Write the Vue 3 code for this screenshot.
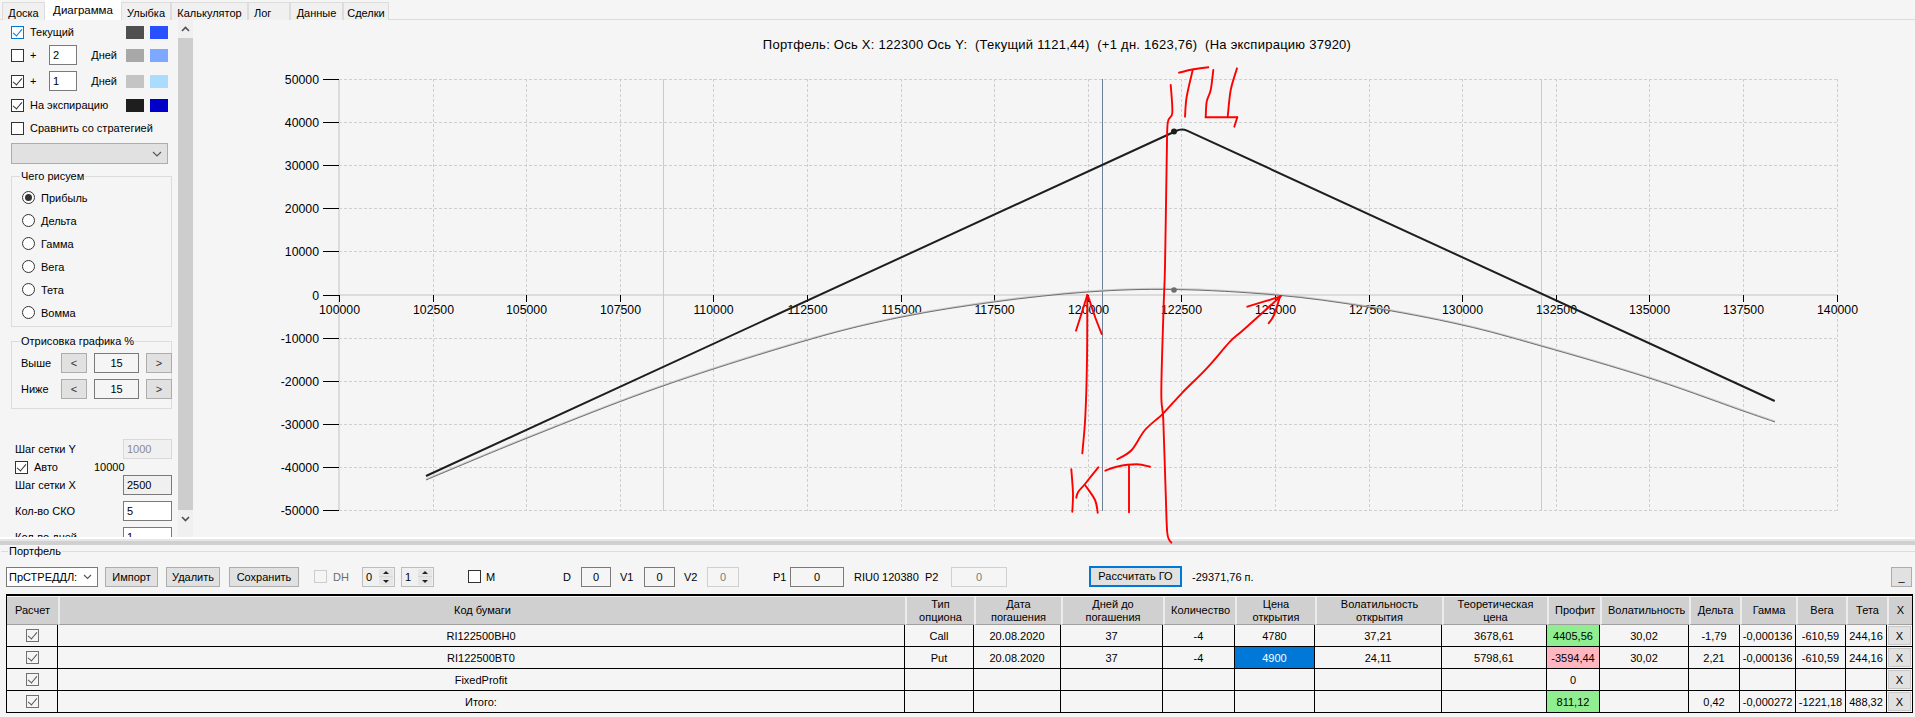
<template>
  <div class="app">
    <div class="tabs">
      <div v-for="t in tabs" :key="t.name" class="tab" :class="[t.cls, { active: t.active }]">{{ t.name }}</div>
    </div>

    <div class="main">
      <div class="side">
        <div class="line r1">
          <span class="cb on focus"></span><span class="lbl">Текущий</span>
          <span class="sw s-dark1"></span><span class="sw s-blue1"></span>
        </div>
        <div class="line r2">
          <span class="cb"></span><span class="plus">+</span><span class="num">2</span><span class="days">Дней</span>
          <span class="sw s-dark2"></span><span class="sw s-blue2"></span>
        </div>
        <div class="line r3">
          <span class="cb on"></span><span class="plus">+</span><span class="num">1</span><span class="days">Дней</span>
          <span class="sw s-dark3"></span><span class="sw s-blue3"></span>
        </div>
        <div class="line r4">
          <span class="cb on"></span><span class="lbl">На экспирацию</span>
          <span class="sw s-dark4"></span><span class="sw s-blue4"></span>
        </div>
        <div class="line r5">
          <span class="cb"></span><span class="lbl">Сравнить со стратегией</span>
        </div>
        <div class="combo-off">
          <svg width="10" height="6" viewBox="0 0 10 6"><path d="M1 1l4 4 4-4" fill="none" stroke="#555" stroke-width="1.1" /></svg>
        </div>

        <div class="group g1">
          <span class="legend">Чего рисуем</span>
          <div v-for="(r, i) in radios" :key="r" class="radio-row">
            <span class="radio" :class="{ sel: i === 0 }"></span><span>{{ r }}</span>
          </div>
        </div>

        <div class="group g2">
          <span class="legend">Отрисовка графика %</span>
          <div class="range-row">
            <span>Выше</span><span class="step">&lt;</span><span class="range-val">15</span><span class="step">&gt;</span>
            <span>Ниже</span><span class="step">&lt;</span><span class="range-val">15</span><span class="step">&gt;</span>
          </div>
        </div>

        <div class="field f-first">
          <span>Шаг сетки Y</span><span class="inp off">1000</span>
        </div>
        <div class="auto">
          <span class="cb on"></span><span class="auto-lbl">Авто</span><span class="auto-val">10000</span>
        </div>
        <div class="field">
          <span>Шаг сетки X</span><span class="inp ro">2500</span>
        </div>
        <div class="field gap">
          <span>Кол-во СКО</span><span class="inp">5</span>
        </div>
        <div class="field gap">
          <span>Кол-во дней</span><span class="inp">1</span>
        </div>
      </div>

      <div class="scroll">
        <svg class="arr" width="9" height="6" viewBox="0 0 9 6"><path d="M1 5l3.5-3.5L8 5" fill="none" stroke="#505050" stroke-width="1.6" /></svg>
        <div class="thumb"></div>
        <svg class="arr" width="9" height="6" viewBox="0 0 9 6"><path d="M1 1l3.5 3.5L8 1" fill="none" stroke="#505050" stroke-width="1.6" /></svg>
      </div>

      <svg class="chart" width="1722" height="517" viewBox="193 20 1722 517">
        <text x="1057" y="49" text-anchor="middle" class="title">{{ title }}</text>

        <!-- сетка -->
        <line v-for="t in yTicks" :key="'gy' + t.v" :x1="X0" :x2="X1" :y1="t.y" :y2="t.y" class="grid" />
        <line v-for="t in xTicks" :key="'gx' + t.v" :x1="t.x" :x2="t.x" :y1="Y_TOP" :y2="Y_BOT" class="grid" />

        <line :x1="X0" :x2="X0" :y1="Y_TOP" :y2="Y_BOT" class="axis" />
        <line :x1="X0" :x2="X1" :y1="Y_ZERO" :y2="Y_ZERO" class="axis" />

        <line v-for="x in [663.5, 1541.5]" :key="x" :x1="x" :x2="x" :y1="Y_TOP" :y2="Y_BOT" class="sigma" />
        <line x1="1102.5" x2="1102.5" :y1="Y_TOP" :y2="Y_BOT" class="spot" />

        <line v-for="t in yTicks" :key="'ty' + t.v" x1="323" :x2="X0" :y1="t.y" :y2="t.y" class="tick" />
        <line v-for="t in xTicks" :key="'tx' + t.v" :x1="t.x" :x2="t.x" :y1="Y_ZERO" :y2="Y_ZERO + 7" class="tick" />

        <text v-for="t in yTicks" :key="'ly' + t.v" x="319" :y="t.y + 4.5" text-anchor="end" class="num-label">{{ t.v }}</text>
        <text v-for="t in xTicks" :key="'lx' + t.v" :x="t.x" y="313.5" text-anchor="middle" class="num-label">{{ t.v }}</text>

        <!-- кривые -->
        <path :d="curve" class="curve-light" transform="translate(0 -0.8)" />
        <path :d="curve" class="curve-dark" />
        <circle cx="1174" cy="290" r="2.8" fill="#6e6e6e" />
        <path d="M426 476L1176 131Q1181.5 128 1187 130.6L1774.7 401" class="expiry" />
        <circle cx="1174" cy="131.5" r="3" fill="#1e1e1e" />
      </svg>
    </div>

    <div class="split"></div>

    <div class="portfolio">
      <span class="legend legend-p">Портфель</span>
      <div class="tool">
        <div class="t-combo">
          <span>ПрСТРЕДДЛ:</span>
          <svg width="9" height="6" viewBox="0 0 9 6"><path d="M1 1l3.5 3.5L8 1" fill="none" stroke="#555" stroke-width="1.1" /></svg>
        </div>
        <span class="btn t-import">Импорт</span>
        <span class="btn t-del">Удалить</span>
        <span class="btn t-save">Сохранить</span>
        <span class="cb dis t-dh"></span>
        <span class="t-lbl t-dhl dim">DH</span>
        <div class="spin t-s0"><span>0</span><i></i></div>
        <div class="spin t-s1"><span>1</span><i></i></div>
        <span class="cb t-m"></span>
        <span class="t-lbl t-ml">M</span>
        <span class="t-lbl t-d">D</span>
        <span class="box t-b1">0</span>
        <span class="t-lbl t-v1">V1</span>
        <span class="box t-b2">0</span>
        <span class="t-lbl t-v2">V2</span>
        <span class="box off t-b3">0</span>
        <span class="t-lbl t-p1">P1</span>
        <span class="box t-b4">0</span>
        <span class="t-lbl t-ri">RIU0 120380</span>
        <span class="t-lbl t-p2">P2</span>
        <span class="box off t-b5">0</span>
        <span class="btn go">Рассчитать ГО</span>
        <span class="t-lbl t-sum">-29371,76 п.</span>
        <span class="btn t-min">_</span>
      </div>

      <div class="table-wrap">
        <table>
          <colgroup>
            <col v-for="(w, i) in colWidths" :key="i" :style="{ width: w + 'px' }" />
          </colgroup>
          <thead>
            <tr>
              <th v-for="h in headers" :key="h" class="th">{{ h }}</th>
            </tr>
          </thead>
          <tbody>
            <tr v-for="row in rows" :key="row.code">
              <td><span class="cb on grid-cb"></span></td>
              <td>{{ row.code }}</td>
              <td>{{ row.type }}</td>
              <td>{{ row.date }}</td>
              <td>{{ row.days }}</td>
              <td>{{ row.qty }}</td>
              <td :class="{ picked: row.picked }">{{ row.open }}</td>
              <td>{{ row.vola }}</td>
              <td>{{ row.theo }}</td>
              <td :class="row.tone">{{ row.profit }}</td>
              <td>{{ row.iv }}</td>
              <td>{{ row.delta }}</td>
              <td>{{ row.gamma }}</td>
              <td>{{ row.vega }}</td>
              <td>{{ row.theta }}</td>
              <td class="x-cell"><span class="x-btn">X</span></td>
            </tr>
          </tbody>
        </table>
      </div>
    </div>

    <!-- пометки красным поверх скриншота -->
    <svg class="marks" width="1915" height="717" viewBox="0 0 1915 717">
      <path v-for="(d, i) in marks" :key="i" :d="d" />
    </svg>
  </div>
</template>

<script setup>
const X0 = 339
const STEP_X = 93.6
const X1 = X0 + STEP_X * 16
const Y_TOP = 79
const Y_ZERO = 295
const Y_BOT = 511
const STEP_Y = 43.1

const title = 'Портфель: Ось X: 122300 Ось Y:\u00a0\u00a0(Текущий 1121,44)\u00a0\u00a0(+1 дн. 1623,76)\u00a0\u00a0(На экспирацию 37920)'

const tabs = [
  { name: 'Доска', cls: 'w1' },
  { name: 'Диаграмма', cls: 'w2', active: true },
  { name: 'Улыбка', cls: 'w3' },
  { name: 'Калькулятор', cls: 'w4' },
  { name: 'Лог', cls: 'w5' },
  { name: 'Данные', cls: 'w6' },
  { name: 'Сделки', cls: 'w7' },
]

const radios = ['Прибыль', 'Дельта', 'Гамма', 'Вега', 'Тета', 'Вомма']

const xTicks = []
for (let i = 0; i <= 16; i++) {
  xTicks.push({ v: 100000 + i * 2500, x: Math.round(X0 + i * STEP_X) + 0.5 })
}
const yTicks = []
for (let i = 5; i >= -5; i--) {
  yTicks.push({ v: i * 10000, y: Math.round(294.5 - i * STEP_Y) + 0.5 })
}

const pts = [
  [426, 480], [530, 437], [663, 386], [808, 340], [902, 317], [994, 302], [1088, 292],
  [1174, 289.5], [1276, 295], [1368, 307], [1462, 325], [1541, 346], [1649, 378], [1743, 411], [1775, 422],
]

// Катмулл-Ром, чтобы линии были гладкими
function smooth(p) {
  let d = `M${p[0][0]} ${p[0][1]}`
  for (let i = 0; i < p.length - 1; i++) {
    const a = p[Math.max(i - 1, 0)]
    const b = p[i]
    const c = p[i + 1]
    const e = p[Math.min(i + 2, p.length - 1)]
    const c1x = b[0] + (c[0] - a[0]) / 6
    const c1y = b[1] + (c[1] - a[1]) / 6
    const c2x = c[0] - (e[0] - b[0]) / 6
    const c2y = c[1] - (e[1] - b[1]) / 6
    d += `C${c1x.toFixed(1)} ${c1y.toFixed(1)} ${c2x.toFixed(1)} ${c2y.toFixed(1)} ${c[0]} ${c[1]}`
  }
  return d
}
const curve = smooth(pts)

const marks = [
  // длинная вертикаль
  [[1170.7, 85], [1172.3, 113], [1167.7, 123], [1166.7, 160], [1165, 266], [1163.5, 310], [1161.3, 393], [1163.3, 420], [1165.7, 493], [1167.3, 533], [1171.3, 542.7]],
  // Т
  [[1179, 72.7], [1193.3, 69.3], [1208.3, 67.3]],
  [[1192.7, 70], [1186.7, 96.7], [1185, 116.7]],
  // Ц
  [[1213.3, 70], [1210.7, 90], [1206.7, 101.7], [1205.7, 117.3]],
  [[1205.7, 117.3], [1237.3, 117.3]],
  [[1237.3, 117.3], [1234.3, 126.7]],
  [[1237, 68.3], [1230.7, 90], [1227.7, 116.7]],
  // стрелка вверх
  [[1082.3, 453.3], [1085.3, 416.7], [1087, 360], [1087.3, 295]],
  [[1087.3, 295], [1080, 318.3], [1076, 330.7]],
  [[1088.3, 296.7], [1095, 316.7], [1101.7, 334]],
  // стрелка наискось
  [[1117.3, 459.3], [1131.7, 450], [1145, 430], [1163.3, 413.3], [1181.7, 393.3], [1206.7, 368.3], [1230, 341.7], [1243.3, 330], [1281, 296]],
  [[1247.3, 306.7], [1280, 296.7]],
  [[1280, 296.7], [1274, 315], [1268.7, 323.3]],
  // К
  [[1071.3, 469.3], [1073, 493.3], [1072.3, 511.7]],
  [[1098.3, 467.3], [1085, 484], [1078.3, 491.7], [1076.3, 497.7]],
  [[1085, 485], [1095, 500], [1097.7, 512.7]],
  // Т
  [[1105.3, 470.7], [1116.7, 466.7], [1136.7, 464.3], [1150, 466.7]],
  [[1129, 465.7], [1129, 512.3]],
].map(smooth)

const colWidths = [51, 847, 69, 87, 102, 72, 80, 127, 105, 53, 89, 51, 56, 50, 41, 25]
const headers = [
  'Расчет', 'Код бумаги', 'Тип опциона', 'Дата погашения', 'Дней до погашения', 'Количество',
  'Цена открытия', 'Волатильность открытия', 'Теоретическая цена', 'Профит', 'Волатильность',
  'Дельта', 'Гамма', 'Вега', 'Тета', 'X',
]

const rows = [
  {
    code: 'RI122500BH0', type: 'Call', date: '20.08.2020', days: '37', qty: '-4', open: '4780',
    vola: '37,21', theo: '3678,61', profit: '4405,56', tone: 'up', iv: '30,02', delta: '-1,79',
    gamma: '-0,000136', vega: '-610,59', theta: '244,16',
  },
  {
    code: 'RI122500BT0', type: 'Put', date: '20.08.2020', days: '37', qty: '-4', open: '4900', picked: true,
    vola: '24,11', theo: '5798,61', profit: '-3594,44', tone: 'down', iv: '30,02', delta: '2,21',
    gamma: '-0,000136', vega: '-610,59', theta: '244,16',
  },
  { code: 'FixedProfit', profit: '0' },
  {
    code: 'Итого:', profit: '811,12', tone: 'up', delta: '0,42', gamma: '-0,000272', vega: '-1221,18', theta: '488,32',
  },
]
</script>

<style>
html, body {
  margin: 0;
  background: #f5f5f5;
}
</style>

<style scoped>
.app {
  position: relative;
  width: 1915px;
  height: 717px;
  overflow: hidden;
  background: #f5f5f5;
  color: #000;
  font-family: "Liberation Sans", Arial, sans-serif;
  font-size: 11px;
}

.tabs {
  display: flex;
  align-items: flex-end;
  height: 20px;
  padding-left: 2px;
  box-sizing: border-box;
  border-bottom: 1px solid #dcdcdc;
}
.tab {
  height: 18px;
  line-height: 18px;
  box-sizing: border-box;
  margin-bottom: -1px;
  padding-top: 1px;
  background: #f0f0f0;
  border: 1px solid #dcdcdc;
  border-bottom: 0;
  text-align: center;
}
.tab.active {
  height: 20px;
  line-height: 18px;
  padding-top: 0;
  background: #fff;
  border-color: #fff;
  font-size: 11.5px;
}
.w1 { width: 43px; }
.w2 { width: 76px; }
.w3 { width: 50px; }
.w4 { width: 77px; }
.w5 { width: 42px; padding-left: 5px; text-align: left; }
.w6 { width: 53px; }
.w7 { width: 46px; }

.main {
  display: flex;
  height: 517px;
}
.side {
  width: 178px;
  height: 517px;
  overflow: hidden;
  box-sizing: border-box;
  padding-left: 11px;
  padding-top: 1px;
  flex: none;
}

.line {
  display: flex;
  align-items: center;
  height: 22px;
  width: 157px;
}
.r2 { margin-top: 1px; }
.r3 { margin-top: 4px; }
.r4 { margin-top: 2px; }
.r5 { margin-top: 1px; }
.lbl { margin-left: 6px; margin-right: auto; }
.plus { margin-left: 6px; width: 19px; }
.num {
  width: 23px;
  height: 18px;
  line-height: 18px;
  padding-left: 3px;
  background: #fff;
  border: 1px solid #7a7a7a;
  margin-right: auto;
}
.days { margin-right: 9px; }
.sw { width: 18px; height: 13px; flex: none; }
.sw + .sw { margin-left: 6px; }
.s-dark1 { background: #505050; }
.s-blue1 { background: #2850ff; }
.s-dark2 { background: #a8a8a8; }
.s-blue2 { background: #7ea8ff; }
.s-dark3 { background: #c4c4c4; }
.s-blue3 { background: #aadcff; }
.s-dark4 { background: #1e1e1e; }
.s-blue4 { background: #0000c8; }

.cb {
  position: relative;
  display: inline-block;
  width: 13px;
  height: 13px;
  box-sizing: border-box;
  border: 1px solid #333;
  background: #fff;
  flex: none;
}
.cb.on::after {
  content: "";
  position: absolute;
  left: 3px;
  top: 0;
  width: 4px;
  height: 8px;
  border: solid #333;
  border-width: 0 1px 1px 0;
  transform: rotate(40deg);
}
.cb.focus { border-color: #0078d7; }
.cb.focus::after { border-color: #0078d7; }
.cb.dis { border-color: #ccc; background: #f5f5f5; }
.grid-cb { border-color: #707070; vertical-align: middle; background: #f5f5f5; }
.grid-cb.on::after { border-color: #555; }

.combo-off {
  display: flex;
  align-items: center;
  justify-content: flex-end;
  width: 157px;
  height: 21px;
  margin-top: 4px;
  box-sizing: border-box;
  padding-right: 5px;
  background: #e1e1e1;
  border: 1px solid #adadad;
}

.group {
  position: relative;
  width: 161px;
  box-sizing: border-box;
  border: 1px solid #dcdcdc;
}
.legend {
  position: absolute;
  top: -7px;
  left: 8px;
  padding: 0 1px;
  line-height: 13px;
  background: #f5f5f5;
  white-space: nowrap;
}
.g1 {
  margin-top: 12px;
  height: 151px;
  padding: 9px 0 0 10px;
}
.radio-row {
  display: flex;
  align-items: center;
  height: 23px;
}
.radio {
  position: relative;
  width: 13px;
  height: 13px;
  box-sizing: border-box;
  border: 1px solid #333;
  border-radius: 50%;
  background: #fff;
  margin-right: 6px;
}
.radio.sel::after {
  content: "";
  position: absolute;
  left: 2px;
  top: 2px;
  width: 7px;
  height: 7px;
  border-radius: 50%;
  background: #333;
}
.g2 {
  margin-top: 14px;
  height: 68px;
  padding: 11px 6px 0 9px;
}
.range-row {
  display: grid;
  grid-template-columns: 33px 26px 45px 26px;
  grid-auto-rows: 20px;
  column-gap: 7px;
  row-gap: 6px;
  align-items: center;
}
.step {
  height: 20px;
  line-height: 18px;
  box-sizing: border-box;
  text-align: center;
  background: #e1e1e1;
  border: 1px solid #adadad;
  color: #333;
}
.range-val {
  height: 20px;
  line-height: 18px;
  box-sizing: border-box;
  text-align: center;
  border: 1px solid #7a7a7a;
  background: #f5f5f5;
}

.field {
  display: flex;
  align-items: center;
  justify-content: space-between;
  width: 157px;
  height: 20px;
  margin-left: 4px;
}
.field.gap { margin-top: 6px; }
.f-first { margin-top: 30px; }
.inp {
  width: 49px;
  height: 20px;
  line-height: 18px;
  box-sizing: border-box;
  padding-left: 3px;
  background: #fff;
  border: 1px solid #7a7a7a;
}
.inp.off { background: #f0f0f0; border-color: #d9d9d9; color: #8a8a8a; }
.inp.ro { background: #f0f0f0; }
.auto {
  display: flex;
  align-items: center;
  height: 16px;
  margin-left: 4px;
}
.auto-lbl { margin-left: 6px; width: 60px; }

.scroll {
  flex: none;
  width: 15px;
  display: flex;
  flex-direction: column;
  align-items: center;
  background: #f0f0f0;
}
.arr { margin: 6px 0; flex: none; }
.thumb {
  width: 15px;
  height: 472px;
  background: #cdcdcd;
}

.chart { display: block; flex: none; }
.title {
  font-size: 13px;
  letter-spacing: 0.25px;
  fill: #000;
}
.grid { stroke: #cfcfcf; stroke-width: 1; stroke-dasharray: 3 2; }
.axis { stroke: #dcdcdc; stroke-width: 2; }
.sigma { stroke: #f4b8c0; stroke-width: 1; }
.spot { stroke: #6c7f96; stroke-width: 1; }
.tick { stroke: #000; stroke-width: 1; }
.num-label { font-size: 12.3px; fill: #000; }
.curve-light { fill: none; stroke: #cccccc; stroke-width: 1.6; }
.curve-dark { fill: none; stroke: #707070; stroke-width: 1; }
.expiry { fill: none; stroke: #1e1e1e; stroke-width: 2; }

.split {
  height: 8px;
  box-sizing: border-box;
  background: #d0d0d0;
  border-top: 2px solid #fff;
}
.split::before {
  content: "";
  display: block;
  height: 2px;
  background: #e6e6e6;
}

.portfolio {
  position: relative;
  height: 172px;
  padding-top: 21px;
  box-sizing: border-box;
}
.portfolio::before {
  content: "";
  position: absolute;
  top: 6px;
  left: 1px;
  right: 0;
  border-top: 1px solid #dcdcdc;
}
.legend-p { top: 0; left: 8px; z-index: 1; }

.tool {
  display: flex;
  align-items: center;
  height: 21px;
  padding-left: 6px;
}
.tool > * { flex: none; }
.t-combo {
  display: flex;
  align-items: center;
  justify-content: space-between;
  width: 92px;
  height: 20px;
  box-sizing: border-box;
  padding: 0 5px 0 2px;
  background: #fff;
  border: 1px solid #7a7a7a;
  overflow: hidden;
}
.btn {
  height: 20px;
  line-height: 18px;
  box-sizing: border-box;
  text-align: center;
  background: #e1e1e1;
  border: 1px solid #adadad;
}
.t-import { width: 53px; margin-left: 7px; }
.t-del { width: 54px; margin-left: 8px; }
.t-save { width: 70px; margin-left: 9px; }
.t-dh { margin-left: 15px; }
.t-lbl { white-space: nowrap; }
.t-dhl { margin-left: 6px; width: 16px; }
.dim { color: #6d6d6d; }
.spin {
  position: relative;
  width: 33px;
  height: 20px;
  line-height: 18px;
  box-sizing: border-box;
  padding-left: 3px;
  background: #f0f0f0;
  border: 1px solid #bdbdbd;
}
.spin i {
  position: absolute;
  right: 1px;
  top: 1px;
  width: 14px;
  height: 16px;
  background:
    linear-gradient(#d8d8d8, #d8d8d8) center / 14px 1px no-repeat,
    #e6e6e6;
}
.spin i::before,
.spin i::after {
  content: "";
  position: absolute;
  left: 4px;
  border: 3px solid transparent;
}
.spin i::before { top: -1px; border-bottom: 3px solid #222; }
.spin i::after { bottom: -1px; border-top: 3px solid #222; }
.t-s0 { margin-left: 13px; }
.t-s1 { margin-left: 6px; }
.t-m { margin-left: 34px; }
.t-ml { margin-left: 5px; width: 10px; }
.t-d { margin-left: 67px; width: 9px; }
.box {
  height: 20px;
  line-height: 18px;
  box-sizing: border-box;
  text-align: center;
  border: 1px solid #7a7a7a;
  background: #f5f5f5;
}
.box.off { border-color: #d0d0d0; color: #7a7a7a; }
.t-b1 { width: 30px; margin-left: 9px; }
.t-v1 { width: 14px; margin-left: 9px; }
.t-b2 { width: 31px; margin-left: 10px; }
.t-v2 { width: 14px; margin-left: 9px; }
.t-b3 { width: 32px; margin-left: 9px; }
.t-p1 { width: 14px; margin-left: 34px; }
.t-b4 { width: 54px; margin-left: 3px; }
.t-ri { width: 64px; margin-left: 10px; }
.t-p2 { width: 14px; margin-left: 7px; }
.t-b5 { width: 56px; margin-left: 12px; }
.go {
  width: 93px;
  margin-left: 82px;
  height: 21px;
  line-height: 17px;
  border: 2px solid #0078d7;
}
.t-sum { width: 60px; margin-left: 10px; }
.t-min {
  width: 21px;
  margin-left: auto;
  margin-right: 3px;
}

.table-wrap {
  width: 1907px;
  margin: 7px 0 0 6px;
  box-sizing: border-box;
  border: 1px solid #000;
  border-top-width: 2px;
  border-bottom: 0;
  padding-top: 1px;
}
table {
  width: 1905px;
  table-layout: fixed;
  border-collapse: separate;
  border-spacing: 0;
  font-size: 11px;
  background: #f5f5f5;
}
.th {
  height: 28px;
  padding: 0 6px;
  box-sizing: border-box;
  font-weight: normal;
  line-height: 13px;
  background: #d0d0d0;
  border-left: 2px solid #ececec;
  border-bottom: 1px solid #a0a0a0;
}
.th:first-child { border-left: 0; }
td {
  height: 22px;
  padding: 0;
  box-sizing: border-box;
  text-align: center;
  white-space: nowrap;
  border-right: 1px solid #000;
  border-bottom: 1px solid #000;
}
td:last-child { border-right: 0; }
.picked { background: #0078d7; color: #fff; }
.up { background: #90ee90; }
.down { background: #ffb6c1; }
.x-btn {
  display: block;
  height: 19px;
  line-height: 18px;
  margin: 0 1px;
  background: #e1e1e1;
  border: 1px solid #c8c8c8;
  box-sizing: border-box;
}

.marks {
  position: absolute;
  left: 0;
  top: 0;
  pointer-events: none;
}
.marks path {
  fill: none;
  stroke: #f00;
  stroke-width: 1.9;
  stroke-linejoin: round;
  stroke-linecap: round;
}
</style>
